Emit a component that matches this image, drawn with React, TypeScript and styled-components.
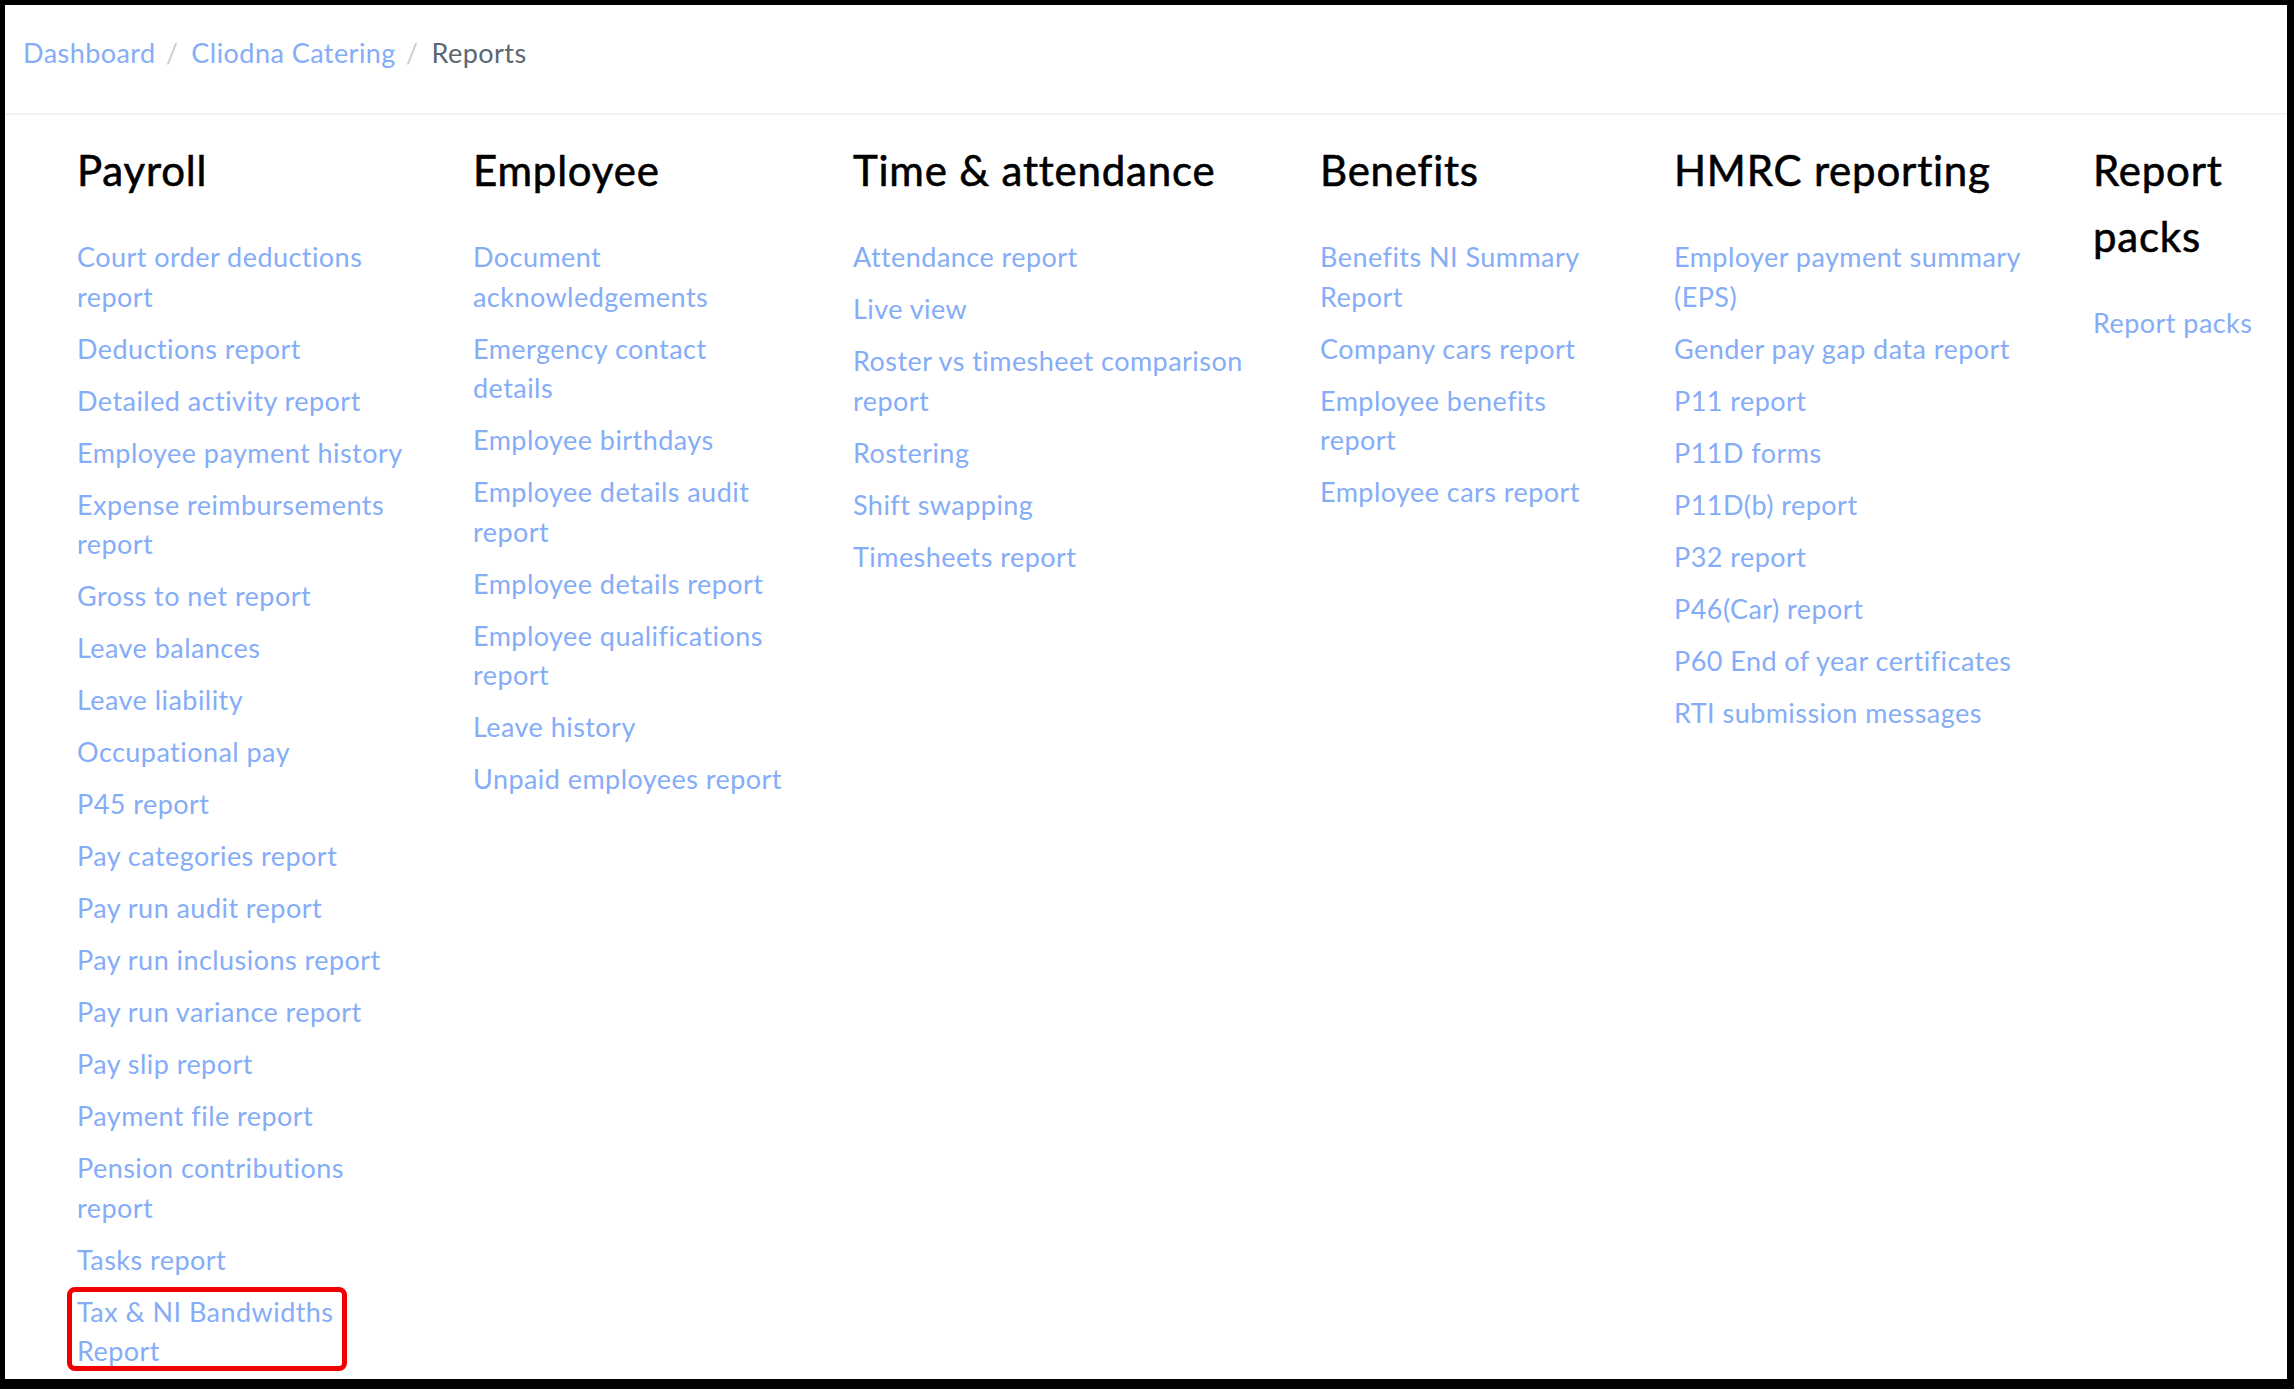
import styled, { createGlobalStyle } from 'styled-components';

const GlobalStyle = createGlobalStyle`
  html, body {
    margin: 0;
    padding: 0;
    background: #000;
  }
  * {
    box-sizing: border-box;
  }
`;

type ReportGroup = {
  title: string;
  textWidth?: number;
  reports: string[];
};

const groups: ReportGroup[] = [
  {
    title: 'Payroll',
    textWidth: 336,
    reports: [
      'Court order deductions report',
      'Deductions report',
      'Detailed activity report',
      'Employee payment history',
      'Expense reimbursements report',
      'Gross to net report',
      'Leave balances',
      'Leave liability',
      'Occupational pay',
      'P45 report',
      'Pay categories report',
      'Pay run audit report',
      'Pay run inclusions report',
      'Pay run variance report',
      'Pay slip report',
      'Payment file report',
      'Pension contributions report',
      'Tasks report',
      'Tax & NI Bandwidths Report',
    ],
  },
  {
    title: 'Employee',
    textWidth: 312,
    reports: [
      'Document acknowledgements',
      'Emergency contact details',
      'Employee birthdays',
      'Employee details audit report',
      'Employee details report',
      'Employee qualifications report',
      'Leave history',
      'Unpaid employees report',
    ],
  },
  {
    title: 'Time & attendance',
    textWidth: 407,
    reports: [
      'Attendance report',
      'Live view',
      'Roster vs timesheet comparison report',
      'Rostering',
      'Shift swapping',
      'Timesheets report',
    ],
  },
  {
    title: 'Benefits',
    textWidth: 280,
    reports: [
      'Benefits NI Summary Report',
      'Company cars report',
      'Employee benefits report',
      'Employee cars report',
    ],
  },
  {
    title: 'HMRC reporting',
    textWidth: 359,
    reports: [
      'Employer payment summary (EPS)',
      'Gender pay gap data report',
      'P11 report',
      'P11D forms',
      'P11D(b) report',
      'P32 report',
      'P46(Car) report',
      'P60 End of year certificates',
      'RTI submission messages',
    ],
  },
  {
    title: 'Report packs',
    reports: ['Report packs'],
  },
];

const highlighted = 'Tax & NI Bandwidths Report';

const Frame = styled.div`
  height: 100vh;
  border-style: solid;
  border-color: #000;
  border-width: 5px 7px 10px 5px;
  background: #fff;
  font-family: Lato, 'Noto Sans', sans-serif;
  letter-spacing: 0.45px;
  overflow: hidden;
`;

const Breadcrumb = styled.nav`
  display: flex;
  align-items: center;
  height: 110px;
  padding: 0 0 14px 18px;
  border-bottom: 2px solid #eef3f8;
  font-size: 27px;
`;

const Crumb = styled.a<{ $current?: boolean }>`
  color: ${(p) => (p.$current ? '#5c6773' : '#85adf7')};
  text-decoration: none;
`;

const CrumbDivider = styled.span`
  color: #c9ced4;
  margin: 0 13px 0 10px;
`;

const Columns = styled.div`
  display: grid;
  grid-template-columns: 396px 380px 467px 354px 419px 1fr;
  align-items: start;
  padding: 22px 0 0 72px;
`;

const Column = styled.section<{ $textWidth?: number }>`
  max-width: ${(p) => (p.$textWidth ? `${p.$textWidth}px` : 'none')};
`;

const Heading = styled.h2`
  margin: 0 0 34px;
  font-size: 42px;
  line-height: 66px;
  font-weight: 400;
  letter-spacing: 0.8px;
  color: #000;
  -webkit-text-stroke: 0.6px #000;
`;

const ReportList = styled.ul`
  list-style: none;
  margin: 0;
  padding: 0;
`;

const ReportItem = styled.li<{ $marked?: boolean }>`
  position: relative;
  margin-bottom: 12.5px;
  font-size: 27px;
  line-height: 39.5px;

  ${(p) =>
    p.$marked &&
    `
    width: fit-content;
    max-width: 262px;

    &::after {
      content: '';
      position: absolute;
      top: -5px;
      left: -10px;
      right: -8px;
      bottom: 0;
      border: 5px solid #f20000;
      border-radius: 8px;
      pointer-events: none;
    }
  `}
`;

const ReportLink = styled.a`
  color: #85adf7;
  text-decoration: none;
`;

export default function App() {
  return (
    <>
      <GlobalStyle />
      <Frame>
        <Breadcrumb>
          <Crumb href="#">Dashboard</Crumb>
          <CrumbDivider>/</CrumbDivider>
          <Crumb href="#">Cliodna Catering</Crumb>
          <CrumbDivider>/</CrumbDivider>
          <Crumb $current>Reports</Crumb>
        </Breadcrumb>
        <Columns>
          {groups.map((group) => (
            <Column key={group.title} $textWidth={group.textWidth}>
              <Heading>{group.title}</Heading>
              <ReportList>
                {group.reports.map((report) => (
                  <ReportItem key={report} $marked={report === highlighted}>
                    <ReportLink href="#">{report}</ReportLink>
                  </ReportItem>
                ))}
              </ReportList>
            </Column>
          ))}
        </Columns>
      </Frame>
    </>
  );
}
